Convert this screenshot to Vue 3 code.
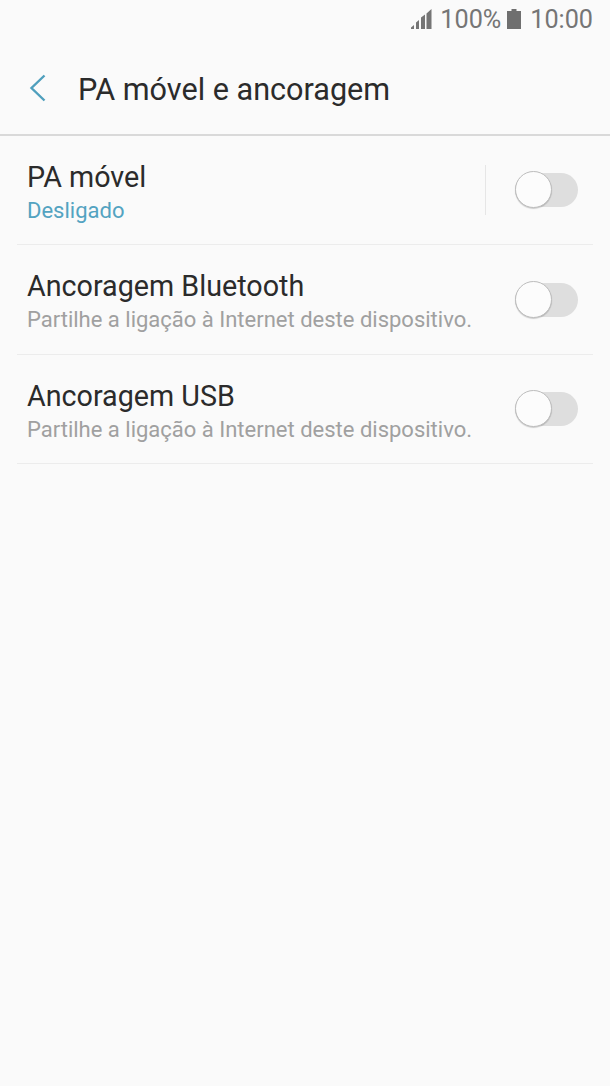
<template>
  <div class="screen">
    <!-- Status bar -->
    <div class="status-bar">
      <svg class="signal" width="21" height="20" viewBox="0 0 21 20">
        <path d="M0 20v-1.5l3-2.5v4z" />
        <path d="M5 20v-6.5l3-2.5v9z" />
        <path d="M10 20V8.5l4-3V20z" />
        <path d="M15.5 20V4.5L20.5 0v20z" />
      </svg>
      <span class="percent">100%</span>
      <svg class="battery" width="14" height="20" viewBox="0 0 14 20">
        <path d="M4.5 0h5v2h4.5v18H0V2h4.5z" />
      </svg>
      <span class="clock">10:00</span>
    </div>

    <!-- Header -->
    <header class="app-bar">
      <svg class="back" width="17" height="28" viewBox="0 0 17 28">
        <path d="M15.5 1.5L2.5 14L15.5 26.5" />
      </svg>
      <h1 class="title">PA móvel e ancoragem</h1>
    </header>

    <!-- Settings list -->
    <div class="settings">
      <div v-for="item in items" :key="item.title" class="row">
        <div class="row-text">
          <div class="row-title">{{ item.title }}</div>
          <div class="row-sub" :class="{ active: item.active }">{{ item.sub }}</div>
        </div>
        <div v-if="item.divider" class="row-divider"></div>
        <div class="switch">
          <div class="knob"></div>
        </div>
      </div>
    </div>
  </div>
</template>

<script setup>
const items = [
  { title: 'PA móvel', sub: 'Desligado', active: true, divider: true },
  { title: 'Ancoragem Bluetooth', sub: 'Partilhe a ligação à Internet deste dispositivo.' },
  { title: 'Ancoragem USB', sub: 'Partilhe a ligação à Internet deste dispositivo.' }
]
</script>

<style>
html, body {
  margin: 0;
  background: #fafafa;
}
</style>

<style scoped>
.screen {
  width: 610px;
  height: 1086px;
  background: #fafafa;
  font-family: Roboto, "Liberation Sans", sans-serif;
  overflow: hidden;
}

.status-bar {
  height: 42px;
  box-sizing: border-box;
  padding: 0 17px 4px 0;
  display: flex;
  justify-content: flex-end;
  align-items: center;
  color: #757575;
  font-size: 25.2px;
}
.status-bar span {
  margin-top: 1px;
}
.signal {
  fill: #757575;
  margin-right: 8px;
}
.percent {
  margin-right: 6px;
}
.battery {
  fill: #6f6f6f;
  margin-right: 9px;
}

.app-bar {
  height: 94px;
  box-sizing: border-box;
  border-bottom: 2px solid #d9d9d9;
  display: flex;
  align-items: center;
}
.back {
  margin-left: 29px;
  fill: none;
  stroke: #4f9fbd;
  stroke-width: 2.4;
}
.title {
  margin: 2px 0 0 32px;
  font-size: 30.6px;
  font-weight: 400;
  color: #2b2b2b;
}

.settings {
  margin-top: -0.25px;
  padding: 0 17px;
}
.row {
  height: 109.5px;
  box-sizing: border-box;
  border-bottom: 1px solid #ececec;
  display: flex;
  align-items: center;
  padding: 0 15px 0 10px;
}
.row-text {
  flex: 1;
  padding-top: 5px;
}
.row-title {
  font-size: 28.7px;
  line-height: 36px;
  color: #2b2b2b;
}
.row-sub {
  font-size: 22px;
  line-height: 32px;
  color: #a0a0a0;
}
.row-sub.active {
  color: #53a3c1;
}
.row-divider {
  width: 1px;
  height: 50px;
  background: #e6e6e6;
  margin-right: 29px;
}
.switch {
  position: relative;
  width: 63px;
  height: 34px;
  border-radius: 17px;
  background: #dedede;
}
.knob {
  position: absolute;
  left: 0;
  top: -2px;
  width: 37px;
  height: 37px;
  box-sizing: border-box;
  border-radius: 50%;
  background: #fcfcfc;
  border: 1px solid #bdbdbd;
  box-shadow: 0 1px 1px rgba(0, 0, 0, 0.18);
}
</style>
